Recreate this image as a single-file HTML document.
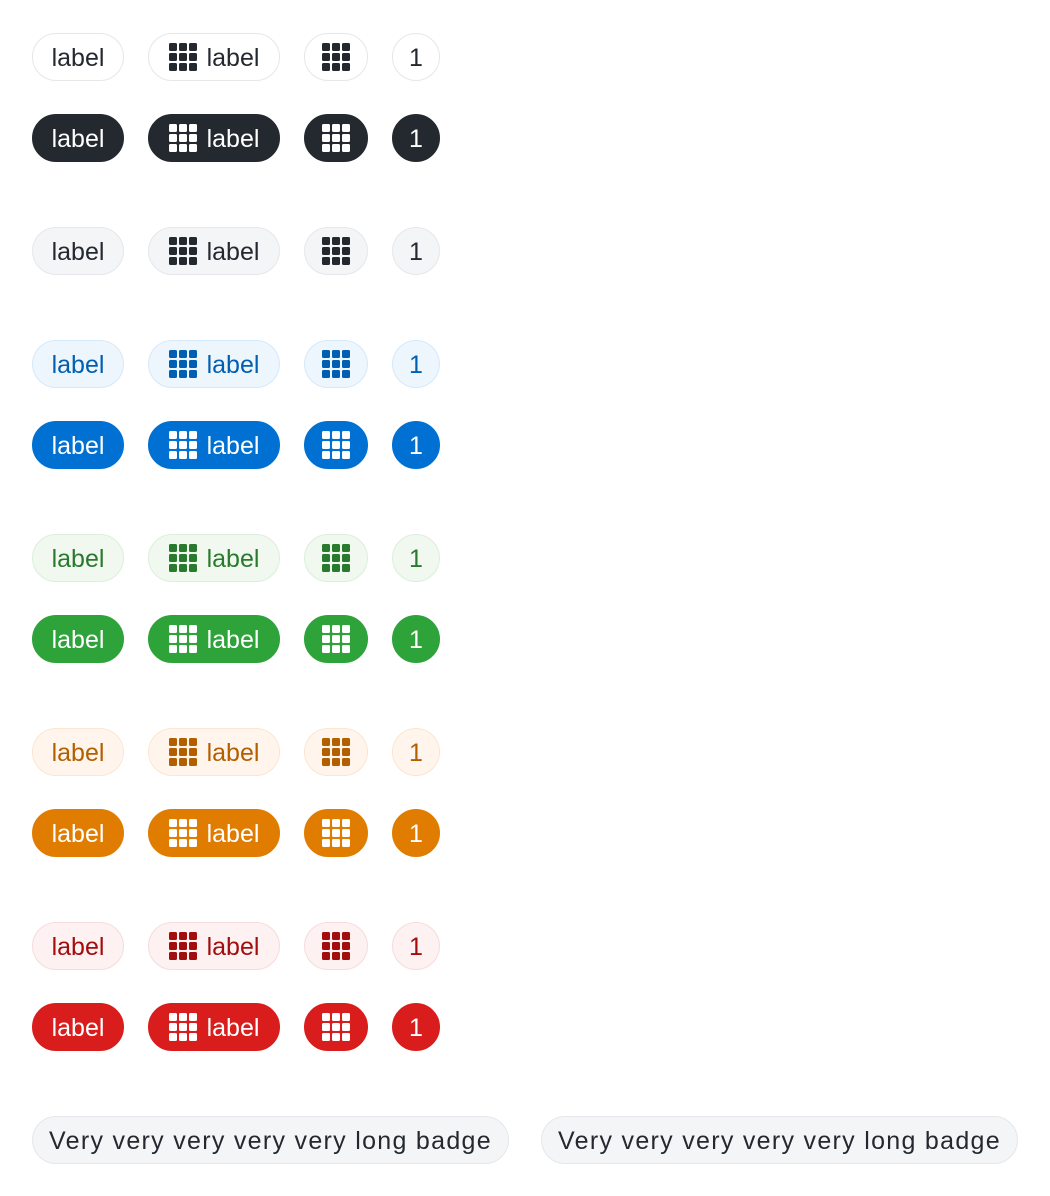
<!DOCTYPE html>
<html><head><meta charset="utf-8"><style>
body{margin:0;width:1050px;height:1196px;background:#fff;font-family:"Liberation Sans",sans-serif;position:relative;overflow:hidden}
.b{position:absolute;height:46px;border:1px solid;border-radius:24px;display:flex;align-items:center;justify-content:center;font-size:25px;box-sizing:content-box;white-space:nowrap;padding-top:2px;height:44px}
.c1{left:32px;width:90px}.c2{left:148px;width:130px}.c3{left:304px;width:62px}.c4{left:392px;width:46px}
.b svg{width:28px;height:28px;display:block;margin-top:-2px}
.c2 svg{margin-right:10px}
.w{background:#fff;border-color:#e5e7eb;color:#24292f;fill:#24292f}
.d{background:#24292f;border-color:#24292f;color:#fff;fill:#fff}
.g{background:#f4f5f7;border-color:#e5e7eb;color:#24292f;fill:#24292f}
.bl{background:#eef6fd;border-color:#d6e9fa;color:#005fb2;fill:#005fb2}
.bd{background:#0070d2;border-color:#0070d2;color:#fff;fill:#fff}
.gl{background:#f0f8f0;border-color:#dcefdc;color:#2a7a2e;fill:#2a7a2e}
.gd{background:#2ea33a;border-color:#2ea33a;color:#fff;fill:#fff}
.ol{background:#fff5ec;border-color:#fbe6d2;color:#b35f00;fill:#b35f00}
.od{background:#e07d00;border-color:#e07d00;color:#fff;fill:#fff}
.rl{background:#fdf1f1;border-color:#f6dcdc;color:#a20d0d;fill:#a20d0d}
.rd{background:#d91c1c;border-color:#d91c1c;color:#fff;fill:#fff}
.long{background:#f4f5f7;border-color:#e5e7eb;color:#24292f;width:475px;letter-spacing:1.3px;font-size:25px}
</style></head><body>
<svg width="0" height="0" style="position:absolute"><defs><g id="i"><rect x="0" y="0" width="8" height="8" rx="1.5"/><rect x="10" y="0" width="8" height="8" rx="1.5"/><rect x="20" y="0" width="8" height="8" rx="1.5"/><rect x="0" y="10" width="8" height="8" rx="1.5"/><rect x="10" y="10" width="8" height="8" rx="1.5"/><rect x="20" y="10" width="8" height="8" rx="1.5"/><rect x="0" y="20" width="8" height="8" rx="1.5"/><rect x="10" y="20" width="8" height="8" rx="1.5"/><rect x="20" y="20" width="8" height="8" rx="1.5"/></g></defs></svg>

<div class="b c1 w" style="top:33px">label</div><div class="b c2 w" style="top:33px"><svg viewBox="0 0 28 28"><use href="#i"/></svg>label</div><div class="b c3 w" style="top:33px"><svg viewBox="0 0 28 28"><use href="#i"/></svg></div><div class="b c4 w" style="top:33px">1</div>

<div class="b c1 d" style="top:114px">label</div><div class="b c2 d" style="top:114px"><svg viewBox="0 0 28 28"><use href="#i"/></svg>label</div><div class="b c3 d" style="top:114px"><svg viewBox="0 0 28 28"><use href="#i"/></svg></div><div class="b c4 d" style="top:114px">1</div>

<div class="b c1 g" style="top:227px">label</div><div class="b c2 g" style="top:227px"><svg viewBox="0 0 28 28"><use href="#i"/></svg>label</div><div class="b c3 g" style="top:227px"><svg viewBox="0 0 28 28"><use href="#i"/></svg></div><div class="b c4 g" style="top:227px">1</div>

<div class="b c1 bl" style="top:340px">label</div><div class="b c2 bl" style="top:340px"><svg viewBox="0 0 28 28"><use href="#i"/></svg>label</div><div class="b c3 bl" style="top:340px"><svg viewBox="0 0 28 28"><use href="#i"/></svg></div><div class="b c4 bl" style="top:340px">1</div>

<div class="b c1 bd" style="top:421px">label</div><div class="b c2 bd" style="top:421px"><svg viewBox="0 0 28 28"><use href="#i"/></svg>label</div><div class="b c3 bd" style="top:421px"><svg viewBox="0 0 28 28"><use href="#i"/></svg></div><div class="b c4 bd" style="top:421px">1</div>

<div class="b c1 gl" style="top:534px">label</div><div class="b c2 gl" style="top:534px"><svg viewBox="0 0 28 28"><use href="#i"/></svg>label</div><div class="b c3 gl" style="top:534px"><svg viewBox="0 0 28 28"><use href="#i"/></svg></div><div class="b c4 gl" style="top:534px">1</div>

<div class="b c1 gd" style="top:615px">label</div><div class="b c2 gd" style="top:615px"><svg viewBox="0 0 28 28"><use href="#i"/></svg>label</div><div class="b c3 gd" style="top:615px"><svg viewBox="0 0 28 28"><use href="#i"/></svg></div><div class="b c4 gd" style="top:615px">1</div>

<div class="b c1 ol" style="top:728px">label</div><div class="b c2 ol" style="top:728px"><svg viewBox="0 0 28 28"><use href="#i"/></svg>label</div><div class="b c3 ol" style="top:728px"><svg viewBox="0 0 28 28"><use href="#i"/></svg></div><div class="b c4 ol" style="top:728px">1</div>

<div class="b c1 od" style="top:809px">label</div><div class="b c2 od" style="top:809px"><svg viewBox="0 0 28 28"><use href="#i"/></svg>label</div><div class="b c3 od" style="top:809px"><svg viewBox="0 0 28 28"><use href="#i"/></svg></div><div class="b c4 od" style="top:809px">1</div>

<div class="b c1 rl" style="top:922px">label</div><div class="b c2 rl" style="top:922px"><svg viewBox="0 0 28 28"><use href="#i"/></svg>label</div><div class="b c3 rl" style="top:922px"><svg viewBox="0 0 28 28"><use href="#i"/></svg></div><div class="b c4 rl" style="top:922px">1</div>

<div class="b c1 rd" style="top:1003px">label</div><div class="b c2 rd" style="top:1003px"><svg viewBox="0 0 28 28"><use href="#i"/></svg>label</div><div class="b c3 rd" style="top:1003px"><svg viewBox="0 0 28 28"><use href="#i"/></svg></div><div class="b c4 rd" style="top:1003px">1</div>

<div class="b long" style="top:1116px;left:32px">Very very very very very long badge</div>
<div class="b long" style="top:1116px;left:541px">Very very very very very long badge</div>
</body></html>
